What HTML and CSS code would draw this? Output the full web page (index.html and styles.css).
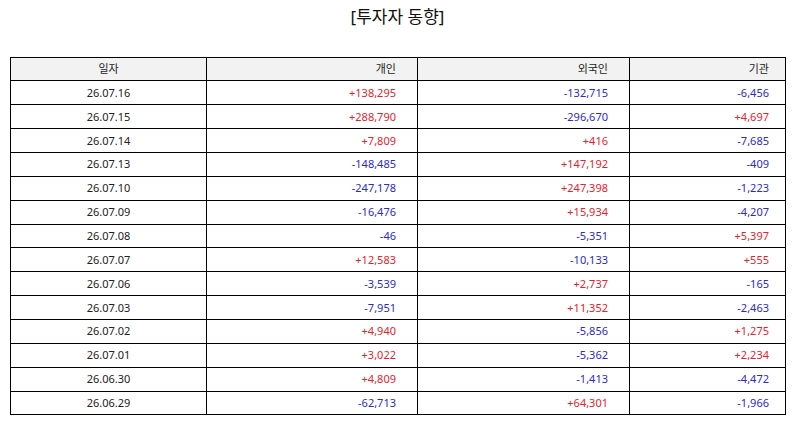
FILE: index.html
```html
<!DOCTYPE html>
<html lang="ko">
<head>
<meta charset="utf-8">
<link rel="stylesheet" href="styles.css">
</head>
<body>
<div class="page">
  <h1 class="title">[투자자 동향]</h1>
  <table class="grid">
    <colgroup>
      <col class="c-date"><col class="c-ind"><col class="c-for"><col class="c-inst">
    </colgroup>
    <thead>
      <tr><th class="date">일자</th><th class="num">개인</th><th class="num">외국인</th><th class="num last">기관</th></tr>
    </thead>
    <tbody>
      <tr><td class="date">26.07.16</td><td class="num up">+138,295</td><td class="num dn">-132,715</td><td class="num last dn">-6,456</td></tr>
      <tr><td class="date">26.07.15</td><td class="num up">+288,790</td><td class="num dn">-296,670</td><td class="num last up">+4,697</td></tr>
      <tr><td class="date">26.07.14</td><td class="num up">+7,809</td><td class="num up">+416</td><td class="num last dn">-7,685</td></tr>
      <tr><td class="date">26.07.13</td><td class="num dn">-148,485</td><td class="num up">+147,192</td><td class="num last dn">-409</td></tr>
      <tr><td class="date">26.07.10</td><td class="num dn">-247,178</td><td class="num up">+247,398</td><td class="num last dn">-1,223</td></tr>
      <tr><td class="date">26.07.09</td><td class="num dn">-16,476</td><td class="num up">+15,934</td><td class="num last dn">-4,207</td></tr>
      <tr><td class="date">26.07.08</td><td class="num dn">-46</td><td class="num dn">-5,351</td><td class="num last up">+5,397</td></tr>
      <tr><td class="date">26.07.07</td><td class="num up">+12,583</td><td class="num dn">-10,133</td><td class="num last up">+555</td></tr>
      <tr><td class="date">26.07.06</td><td class="num dn">-3,539</td><td class="num up">+2,737</td><td class="num last dn">-165</td></tr>
      <tr><td class="date">26.07.03</td><td class="num dn">-7,951</td><td class="num up">+11,352</td><td class="num last dn">-2,463</td></tr>
      <tr><td class="date">26.07.02</td><td class="num up">+4,940</td><td class="num dn">-5,856</td><td class="num last up">+1,275</td></tr>
      <tr><td class="date">26.07.01</td><td class="num up">+3,022</td><td class="num dn">-5,362</td><td class="num last up">+2,234</td></tr>
      <tr><td class="date">26.06.30</td><td class="num up">+4,809</td><td class="num dn">-1,413</td><td class="num last dn">-4,472</td></tr>
      <tr><td class="date">26.06.29</td><td class="num dn">-62,713</td><td class="num up">+64,301</td><td class="num last dn">-1,966</td></tr>
    </tbody>
  </table>
</div>
</body>
</html>
```

FILE: styles.css
```css
html, body {
  margin: 0;
  padding: 0;
  background: #fff;
}
.page {
  padding: 0 9px 0 10px;
  font-family: "Noto Sans", "Noto Sans CJK KR", sans-serif;
  color: #222;
}
.title {
  margin: 0;
  height: 56.5px;
  padding-top: 4px;
  box-sizing: border-box;
  text-align: center;
  font-size: 17px;
  font-weight: normal;
  line-height: 26px;
  color: #111;
}
.grid {
  width: 775px;
  border-collapse: collapse;
  table-layout: fixed;
  font-size: 11px;
}
.c-date { width: 196px; }
.c-ind { width: 211px; }
.c-for { width: 212px; }
.c-inst { width: 156px; }
.grid th, .grid td {
  border: 1px solid #000;
  height: 23.87px;
  padding: 0 21px 0 8px;
  box-sizing: border-box;
  font-weight: normal;
  line-height: 14px;
  vertical-align: middle;
}
.grid th {
  background: #f2f2f2;
  color: #222;
}
.grid .date {
  text-align: center;
  padding: 0;
}
.grid .num {
  text-align: right;
}
.grid .last {
  padding-right: 16px;
}
.up { color: #e8222c; }
.dn { color: #2a2ad0; }
```
